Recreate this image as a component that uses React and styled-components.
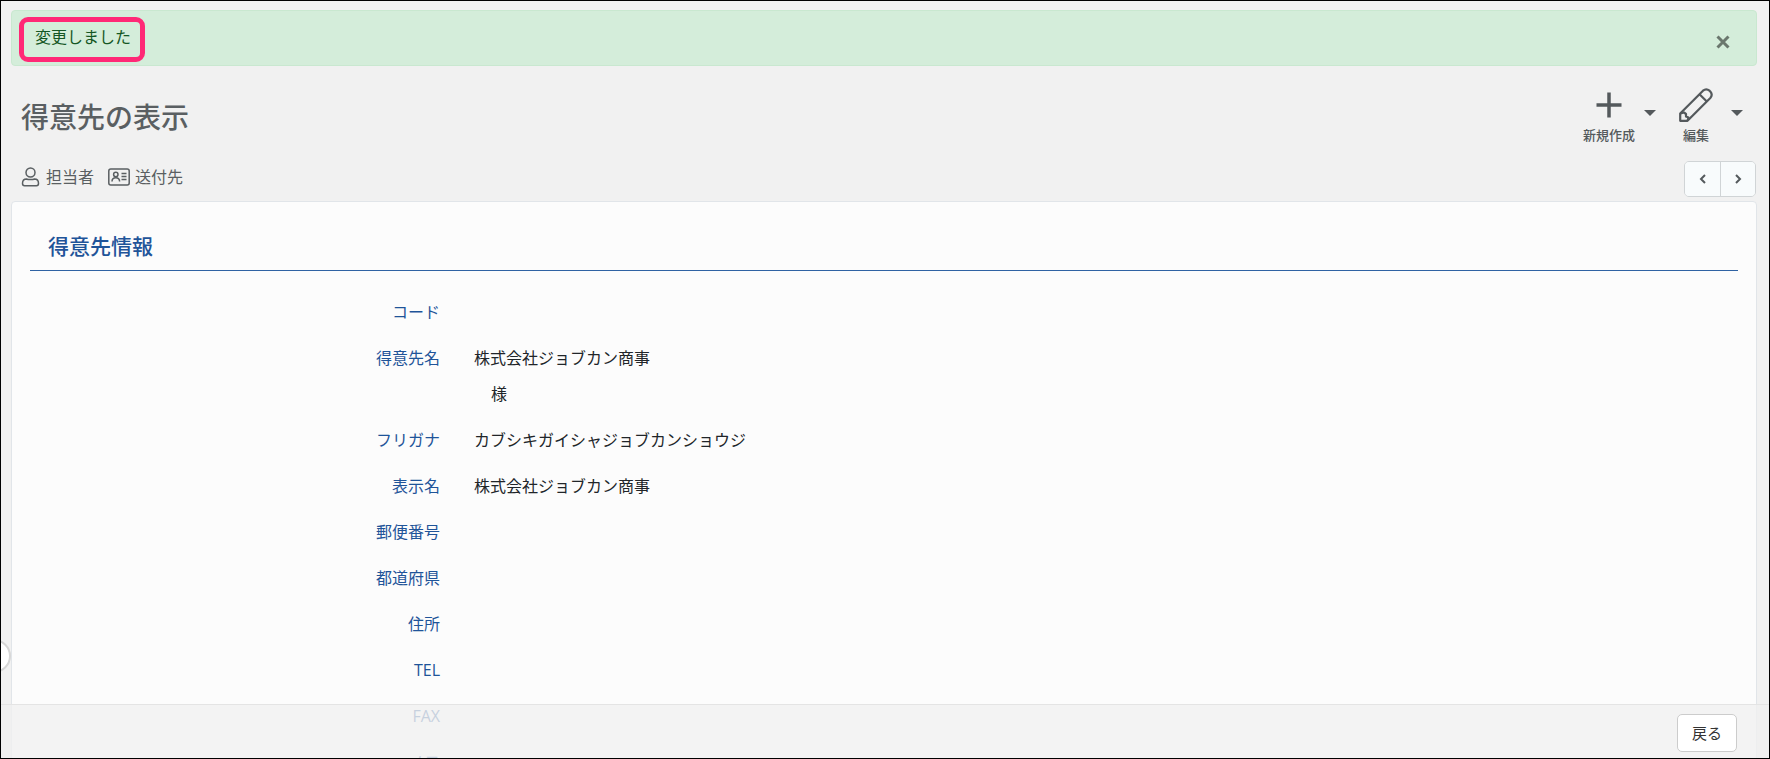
import React from 'react';
import styled, { createGlobalStyle } from 'styled-components';

const GlobalStyle = createGlobalStyle`
  * {
    box-sizing: border-box;
  }
  body {
    margin: 0;
    color: #212529;
    background: #f1f1f1;
    font-family: 'Open Sans', 'Noto Sans CJK JP', sans-serif;
    font-size: 16px;
    line-height: 24px;
  }
  button {
    font-family: inherit;
    cursor: pointer;
  }
`;

const Screen = styled.div`
  position: relative;
  height: 100vh;
  overflow: hidden;
  padding: 9px 12px 0 10px;
  border: 1px solid #000;
`;

const Alert = styled.div`
  display: flex;
  align-items: flex-start;
  justify-content: space-between;
  height: 56px;
  padding: 3px 26px 0 7px;
  color: #155724;
  background: #d4edda;
  border: 1px solid #c9e8d0;
  border-radius: 4px;
`;

const AlertText = styled.p`
  margin: 3px 0 0;
  padding: 3px 9px 8px 11px;
  border: 5px solid #ff2976;
  border-radius: 9px;
`;

const CloseButton = styled.button`
  display: flex;
  margin-top: 21px;
  padding: 0;
  color: #6a776d;
  background: none;
  border: 0;
`;

const Header = styled.header`
  display: flex;
  align-items: flex-start;
  justify-content: space-between;
  height: 90px;
  padding: 22px 14px 0 10px;
`;

const Title = styled.h1`
  margin: 9px 0 0;
  color: #5a5f62;
  font-size: 28px;
  font-weight: 500;
  line-height: 40px;
`;

const Actions = styled.div`
  display: flex;
  gap: 14px;
`;

const ActionGroup = styled.div`
  display: flex;
  align-items: center;
  gap: 9px;
`;

const ActionButton = styled.button`
  display: flex;
  flex-direction: column;
  align-items: center;
  gap: 3px;
  min-width: 52px;
  padding: 0;
  color: #54595c;
  background: none;
  border: 0;
  font-size: 13px;
  font-weight: 500;
  line-height: 20px;
`;

const CaretButton = styled.button`
  margin-bottom: 8px;
  padding: 0;
  background: none;
  border: 0;

  &::after {
    display: block;
    border: 6px solid transparent;
    border-top-color: #54595c;
    border-bottom: 0;
    content: '';
  }
`;

const SubNav = styled.nav`
  display: flex;
  align-items: center;
  justify-content: space-between;
  height: 45px;
  padding: 0 1px 0 10px;
`;

const Links = styled.div`
  display: flex;
  gap: 14px;
  margin-bottom: 4px;
`;

const SubLink = styled.a`
  display: flex;
  align-items: center;
  gap: 5px;
  color: #5a5f62;
  text-decoration: none;
`;

const Pager = styled.div`
  display: flex;
  border: 1px solid #d0d4d6;
  border-radius: 5px;
  overflow: hidden;
`;

const PagerButton = styled.button`
  display: flex;
  align-items: center;
  justify-content: center;
  width: 35px;
  height: 34px;
  padding: 0;
  color: #54595c;
  background: #f8fbfc;
  border: 0;

  & + & {
    border-left: 1px solid #d0d4d6;
  }
`;

const Card = styled.main`
  padding: 24px 18px;
  background: #fcfcfc;
  border: 1px solid #e1e5e9;
  border-radius: 4px;
`;

const SectionTitle = styled.h2`
  margin: 0 0 18px;
  padding: 4px 18px 8px;
  color: #1f5499;
  border-bottom: 1px solid #2f62a3;
  font-size: 21px;
  font-weight: 500;
  line-height: 32px;
`;

const Fields = styled.dl`
  margin: 0;
`;

const Field = styled.div`
  display: grid;
  grid-template-columns: 1fr 3fr;
  padding: 5px 0;
  line-height: 36px;
`;

const Label = styled.dt`
  padding: 0 17px;
  color: #1f5499;
  text-align: right;
`;

const Value = styled.dd`
  margin: 0;
  padding: 0 17px;
`;

const Honorific = styled.div`
  padding-left: 17px;
`;

const Footer = styled.footer`
  position: absolute;
  right: 0;
  bottom: 0;
  left: 0;
  display: flex;
  justify-content: flex-end;
  padding: 9px 32px 6px;
  background: rgba(240, 240, 240, 0.8);
  border-top: 1px solid #e4e4e4;
`;

const BackButton = styled.button`
  padding: 6px 14px;
  color: #333;
  background: #fff;
  border: 1px solid #ccc;
  border-radius: 5px;
  font-size: 15px;
  line-height: 24px;
`;

const DrawerHandle = styled.button`
  position: absolute;
  bottom: 85px;
  left: -24px;
  width: 34px;
  height: 34px;
  padding: 0;
  background: #fff;
  border: 2px solid #d6d6d6;
  border-radius: 50%;
`;

const FIELDS = [
  { label: 'コード' },
  { label: '得意先名', value: '株式会社ジョブカン商事', honorific: '様' },
  { label: 'フリガナ', value: 'カブシキガイシャジョブカンショウジ' },
  { label: '表示名', value: '株式会社ジョブカン商事' },
  { label: '郵便番号' },
  { label: '都道府県' },
  { label: '住所' },
  { label: 'TEL' },
  { label: 'FAX' },
  { label: 'メモ' },
];

function CloseIcon() {
  return (
    <svg width="14" height="14" viewBox="0 0 14 14" stroke="currentColor" strokeWidth="3">
      <path d="M1.5 1.5l11 11M12.5 1.5l-11 11" />
    </svg>
  );
}

function PlusIcon() {
  return (
    <svg width="34" height="34" viewBox="0 0 34 34" stroke="currentColor" strokeWidth="3.5">
      <path d="M17 4.5v25M4.5 17h25" />
    </svg>
  );
}

function PencilIcon() {
  return (
    <svg
      width="34"
      height="34"
      viewBox="0 0 34 34"
      fill="none"
      stroke="currentColor"
      strokeWidth="2.200"
      strokeLinejoin="round"
    >
      <path d="M1.200 32.800V25.500L24 2.700a5 5 0 0 1 6.500 0l.8.8a5 5 0 0 1 0 6.500L8.500 32.800z" />
      <path d="M20.500 6.200l7.300 7.300M1.500 25.500l3.500-1 2 1.500v2.500l2.500 1-1 3.300" />
    </svg>
  );
}

function PersonIcon() {
  return (
    <svg width="20" height="20" viewBox="0 0 20 20" fill="none" stroke="currentColor" strokeWidth="1.5">
      <circle cx="9.500" cy="5.500" r="4.500" />
      <path d="M5.500 12c1.500.8 6.500.8 8 0 2.500 0 4 2 4 4.500 0 1.500-.8 2.200-2 2.200h-12c-1.200 0-2-.7-2-2.200 0-2.500 1.500-4.500 4-4.500z" />
    </svg>
  );
}

function AddressCardIcon() {
  return (
    <svg width="22" height="18" viewBox="0 0 22 18" fill="none" stroke="currentColor" strokeWidth="1.500">
      <rect x=".8" y=".9" width="20.400" height="16" rx="2" />
      <circle cx="7.800" cy="6.500" r="2.200" />
      <path d="M4 13.500c0-2.500 1.300-3.800 3.800-3.800s3.800 1.300 3.800 3.800M13.500 5.500h5M13.500 8.500h5M13.500 11.500h5" />
    </svg>
  );
}

function Chevron({ next }) {
  return (
    <svg width="8" height="10" viewBox="0 0 8 10" fill="none" stroke="currentColor" strokeWidth="2">
      <path d={next ? 'M2 1l4 4-4 4' : 'M6 1L2 5l4 4'} />
    </svg>
  );
}

function App() {
  return (
    <Screen>
      <GlobalStyle />
      <Alert role="alert">
        <AlertText>変更しました</AlertText>
        <CloseButton aria-label="閉じる">
          <CloseIcon />
        </CloseButton>
      </Alert>
      <Header>
        <Title>得意先の表示</Title>
        <Actions>
          <ActionGroup>
            <ActionButton>
              <PlusIcon />
              新規作成
            </ActionButton>
            <CaretButton aria-label="新規作成メニュー" />
          </ActionGroup>
          <ActionGroup>
            <ActionButton>
              <PencilIcon />
              編集
            </ActionButton>
            <CaretButton aria-label="編集メニュー" />
          </ActionGroup>
        </Actions>
      </Header>
      <SubNav>
        <Links>
          <SubLink href="#contacts">
            <PersonIcon />
            担当者
          </SubLink>
          <SubLink href="#destinations">
            <AddressCardIcon />
            送付先
          </SubLink>
        </Links>
        <Pager>
          <PagerButton aria-label="前へ">
            <Chevron />
          </PagerButton>
          <PagerButton aria-label="次へ">
            <Chevron next />
          </PagerButton>
        </Pager>
      </SubNav>
      <Card>
        <SectionTitle>得意先情報</SectionTitle>
        <Fields>
          {FIELDS.map(({ label, value, honorific }) => (
            <Field key={label}>
              <Label>{label}</Label>
              <Value>
                {value}
                {honorific && <Honorific>{honorific}</Honorific>}
              </Value>
            </Field>
          ))}
        </Fields>
      </Card>
      <DrawerHandle aria-label="メニューを開く" />
      <Footer>
        <BackButton>戻る</BackButton>
      </Footer>
    </Screen>
  );
}

export default App;
